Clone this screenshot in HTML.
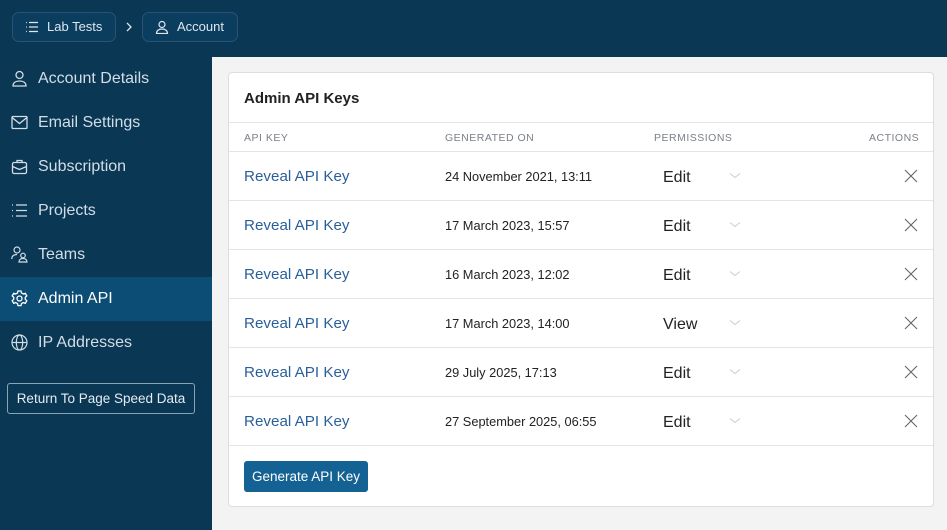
<!DOCTYPE html>
<html><head><meta charset="utf-8"><style>
*{box-sizing:border-box;margin:0;padding:0}
body{width:947px;height:530px;overflow:hidden;font-family:"Liberation Sans",sans-serif;background:#f3f3f3;position:relative}
.top{position:absolute;left:0;top:0;width:947px;height:57px;background:#093754}
.crumb{position:absolute;top:12px;height:30px;border:1px solid #2a5373;border-radius:7px;background:#0b3d5e;color:#dfe7ee;font-size:13px;line-height:28px;padding-left:34px}
.crumb svg{position:absolute;left:12px;top:7px}
.side{position:absolute;left:0;top:57px;width:212px;height:473px;background:#093754}
.item{position:absolute;left:0;width:212px;height:44px;color:#d3dde6;font-size:16px;line-height:44px;padding-left:38px}
.item svg{position:absolute;left:11px;top:13px}
.item.act{background:#0b4d75;color:#fff}
.ret{position:absolute;left:7px;top:326px;width:188px;height:31px;border:1px solid #8aa3b6;border-radius:3px;color:#e5ecf1;font-size:13.5px;line-height:29px;text-align:center}
.card{position:absolute;left:228px;top:72px;width:706px;height:435px;background:#fff;border:1px solid #ddd;border-radius:4px}
h2{position:absolute;left:15px;top:17px;font-size:15px;font-weight:bold;color:#222}
.hr{position:absolute;left:0;width:704px;height:1px;background:#e4e4e4}
.th{position:absolute;top:59px;font-size:10.5px;letter-spacing:.5px;color:#7a8088}
.row{position:absolute;left:0;width:704px;height:49px}
.row .k{position:absolute;left:15px;top:16px;font-size:15.2px;color:#2a5f9a}
.row .d{position:absolute;left:216px;top:17px;font-size:12.8px;color:#222}
.row .p{position:absolute;left:434px;top:17px;font-size:16px;color:#222}
.row .c{position:absolute;left:500px;top:20px}
.row .x{position:absolute;left:675px;top:17px}
.btn{position:absolute;left:15px;top:388px;width:124px;height:31px;background:#146294;border-radius:3px;color:#fff;font-size:13.5px;line-height:31px;text-align:center}
</style></head><body>
<div class="top">
<div class="crumb" style="left:12px;width:104px"><svg width="14" height="14" viewBox="0 0 14 14" stroke="#dfe7ee" fill="none" stroke-width="1.2"><path d="M4 2.5h9M4 7h9M4 11.5h9"/><path d="M1 2.5h.8M1 7h.8M1 11.5h.8"/></svg>Lab Tests</div>
<svg style="position:absolute;left:125px;top:21px" width="8" height="12" viewBox="0 0 8 12" stroke="#dfe7ee" fill="none" stroke-width="1.3"><path d="M2 2l4 4-4 4"/></svg>
<div class="crumb" style="left:142px;width:96px"><svg width="14" height="14" viewBox="0 0 14 14" stroke="#dfe7ee" fill="none" stroke-width="1.2"><circle cx="7" cy="4.5" r="3"/><path d="M1.5 13.5c0-3 2.5-4.5 5.5-4.5s5.5 1.5 5.5 4.5z"/></svg>Account</div>
</div>
<div class="side">
<div class="item" style="top:0"><svg width="17" height="17" viewBox="0 0 17 17" stroke="#d3dde6" fill="none" stroke-width="1.3"><circle cx="8.5" cy="5" r="3.5"/><path d="M2 16c0-3.5 3-5 6.5-5s6.5 1.5 6.5 5z"/></svg>Account Details</div>
<div class="item" style="top:44px"><svg width="17" height="17" viewBox="0 0 17 17" stroke="#d3dde6" fill="none" stroke-width="1.3"><rect x="1" y="2.5" width="15" height="12" rx="1"/><path d="M1 3.5l7.5 6 7.5-6"/></svg>Email Settings</div>
<div class="item" style="top:88px"><svg width="17" height="17" viewBox="0 0 17 17" stroke="#d3dde6" fill="none" stroke-width="1.3"><rect x="1.5" y="4.5" width="14" height="11" rx="1.5"/><path d="M6 4.5V2.5h5v2M1.5 8.5l7 3 7-3"/></svg>Subscription</div>
<div class="item" style="top:132px"><svg width="17" height="17" viewBox="0 0 17 17" stroke="#d3dde6" fill="none" stroke-width="1.3"><path d="M5 3h11M5 8.5h11M5 14h11M1 3h1M1 8.5h1M1 14h1"/></svg>Projects</div>
<div class="item" style="top:176px"><svg width="17" height="17" viewBox="0 0 17 17" stroke="#d3dde6" fill="none" stroke-width="1.2"><circle cx="6" cy="4" r="3"/><path d="M0.8 13c0-3 2-4.5 5.2-4.5"/><circle cx="12" cy="9.5" r="2.3"/><path d="M8 16c0-2.3 1.8-3.5 4-3.5s4 1.2 4 3.5z"/></svg>Teams</div>
<div class="item act" style="top:220px"><svg width="17" height="17" viewBox="0 0 17 17" stroke="#fff" fill="none" stroke-width="1.3"><circle cx="8.5" cy="8.5" r="2.5"/><path d="M7 1h3l.5 2 1.8 1 2-.7 1.5 2.6-1.5 1.4v2l1.5 1.4-1.5 2.6-2-.7-1.8 1-.5 2H7l-.5-2-1.8-1-2 .7-1.5-2.6 1.5-1.4v-2L1.2 5.9l1.5-2.6 2 .7 1.8-1z"/></svg>Admin API</div>
<div class="item" style="top:264px"><svg width="17" height="17" viewBox="0 0 17 17" stroke="#d3dde6" fill="none" stroke-width="1.2"><circle cx="8.5" cy="8.5" r="7.5"/><ellipse cx="8.5" cy="8.5" rx="3.2" ry="7.5"/><path d="M1 8.5h15"/></svg>IP Addresses</div>
<div class="ret">Return To Page Speed Data</div>
</div>
<div class="card">
<h2>Admin API Keys</h2>
<div class="hr" style="top:49px"></div>
<div class="th" style="left:15px">API KEY</div>
<div class="th" style="left:216px">GENERATED ON</div>
<div class="th" style="left:425px">PERMISSIONS</div>
<div class="th" style="left:640px">ACTIONS</div>
<div class="hr" style="top:78px"></div>
<div class="row" style="top:79px"><span class="k">Reveal API Key</span><span class="d">24 November 2021, 13:11</span><span class="p">Edit</span><svg class="c" width="12" height="8" viewBox="0 0 12 8" stroke="#ccc" fill="none"><path d="M1 1.5l5 4 5-4"/></svg><svg class="x" width="14" height="14" viewBox="0 0 14 14" stroke="#666" stroke-width="1.1"><path d="M1 1l12 12M13 1L1 13"/></svg></div>
<div class="hr" style="top:127px"></div>
<div class="row" style="top:128px"><span class="k">Reveal API Key</span><span class="d">17 March 2023, 15:57</span><span class="p">Edit</span><svg class="c" width="12" height="8" viewBox="0 0 12 8" stroke="#ccc" fill="none"><path d="M1 1.5l5 4 5-4"/></svg><svg class="x" width="14" height="14" viewBox="0 0 14 14" stroke="#666" stroke-width="1.1"><path d="M1 1l12 12M13 1L1 13"/></svg></div>
<div class="hr" style="top:176px"></div>
<div class="row" style="top:177px"><span class="k">Reveal API Key</span><span class="d">16 March 2023, 12:02</span><span class="p">Edit</span><svg class="c" width="12" height="8" viewBox="0 0 12 8" stroke="#ccc" fill="none"><path d="M1 1.5l5 4 5-4"/></svg><svg class="x" width="14" height="14" viewBox="0 0 14 14" stroke="#666" stroke-width="1.1"><path d="M1 1l12 12M13 1L1 13"/></svg></div>
<div class="hr" style="top:225px"></div>
<div class="row" style="top:226px"><span class="k">Reveal API Key</span><span class="d">17 March 2023, 14:00</span><span class="p">View</span><svg class="c" width="12" height="8" viewBox="0 0 12 8" stroke="#ccc" fill="none"><path d="M1 1.5l5 4 5-4"/></svg><svg class="x" width="14" height="14" viewBox="0 0 14 14" stroke="#666" stroke-width="1.1"><path d="M1 1l12 12M13 1L1 13"/></svg></div>
<div class="hr" style="top:274px"></div>
<div class="row" style="top:275px"><span class="k">Reveal API Key</span><span class="d">29 July 2025, 17:13</span><span class="p">Edit</span><svg class="c" width="12" height="8" viewBox="0 0 12 8" stroke="#ccc" fill="none"><path d="M1 1.5l5 4 5-4"/></svg><svg class="x" width="14" height="14" viewBox="0 0 14 14" stroke="#666" stroke-width="1.1"><path d="M1 1l12 12M13 1L1 13"/></svg></div>
<div class="hr" style="top:323px"></div>
<div class="row" style="top:324px"><span class="k">Reveal API Key</span><span class="d">27 September 2025, 06:55</span><span class="p">Edit</span><svg class="c" width="12" height="8" viewBox="0 0 12 8" stroke="#ccc" fill="none"><path d="M1 1.5l5 4 5-4"/></svg><svg class="x" width="14" height="14" viewBox="0 0 14 14" stroke="#666" stroke-width="1.1"><path d="M1 1l12 12M13 1L1 13"/></svg></div>
<div class="hr" style="top:372px"></div>
<div class="btn">Generate API Key</div>
</div>
</body></html>
